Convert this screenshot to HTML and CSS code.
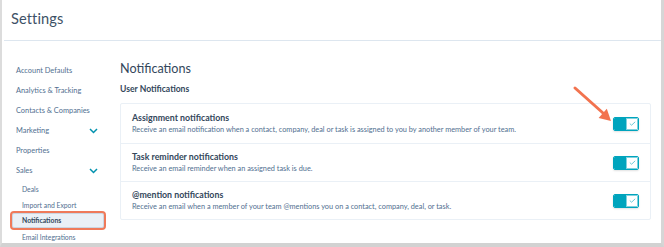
FILE: index.html
```html
<!DOCTYPE html>
<html>
<head>
<meta charset="utf-8">
<link rel="stylesheet" href="styles.css">
</head>
<body>
<div class="frame">
  <div class="header"><h1 class="title">Settings</h1></div>
  <div class="main">
    <nav class="sidebar">
      <div class="nav-item">Account Defaults</div>
      <div class="nav-item">Analytics &amp; Tracking</div>
      <div class="nav-item">Contacts &amp; Companies</div>
      <div class="nav-item">Marketing <svg class="chev" width="9" height="6" viewBox="0 0 9 6"><polyline points="1,1 4.5,4.5 8,1" fill="none" stroke="#0091ae" stroke-width="1.5"/></svg></div>
      <div class="nav-item">Properties</div>
      <div class="nav-item">Sales <svg class="chev" width="9" height="6" viewBox="0 0 9 6"><polyline points="1,1 4.5,4.5 8,1" fill="none" stroke="#0091ae" stroke-width="1.5"/></svg></div>
      <div class="sub-list">
        <div class="sub-item first">Deals</div>
        <div class="sub-item">Import and Export</div>
        <div class="sub-item active">Notifications</div>
        <div class="sub-item">Email Integrations</div>
      </div>
    </nav>
    <section class="content">
      <h2 class="heading">Notifications</h2>
      <h3 class="subheading">User Notifications</h3>
      <div class="card">
        <div class="row">
          <div class="row-text">
            <div class="row-title">Assignment notifications</div>
            <div class="row-desc">Receive an email notification when a contact, company, deal or task is assigned to you by another member of your team.</div>
          </div>
          <div class="toggle"><span class="on"></span><span class="knob"><svg width="7" height="5" viewBox="0 0 7 5"><polyline points="0.8,2.6 2.6,4.2 6.2,0.8" fill="none" stroke="#5cc3d3" stroke-width="0.9"/></svg></span></div>
        </div>
        <div class="row">
          <div class="row-text">
            <div class="row-title">Task reminder notifications</div>
            <div class="row-desc">Receive an email reminder when an assigned task is due.</div>
          </div>
          <div class="toggle"><span class="on"></span><span class="knob"><svg width="7" height="5" viewBox="0 0 7 5"><polyline points="0.8,2.6 2.6,4.2 6.2,0.8" fill="none" stroke="#5cc3d3" stroke-width="0.9"/></svg></span></div>
        </div>
        <div class="row">
          <div class="row-text">
            <div class="row-title">@mention notifications</div>
            <div class="row-desc">Receive an email when a member of your team @mentions you on a contact, company, deal, or task.</div>
          </div>
          <div class="toggle"><span class="on"></span><span class="knob"><svg width="7" height="5" viewBox="0 0 7 5"><polyline points="0.8,2.6 2.6,4.2 6.2,0.8" fill="none" stroke="#5cc3d3" stroke-width="0.9"/></svg></span></div>
        </div>
      </div>
    </section>
  </div>
  <svg class="arrow" width="46" height="44" viewBox="0 0 46 44">
    <line x1="5" y1="6" x2="33" y2="31" stroke="#f2734f" stroke-width="3" stroke-linecap="round"/>
    <polygon points="41,39 28.6,35.9 36.8,26.7" fill="#f2734f"/>
  </svg>
</div>
</body>
</html>
```

FILE: styles.css
```css
* { box-sizing: border-box; }
html, body { margin: 0; padding: 0; background: #fff; }
body { font-family: Lato, "Noto Sans", sans-serif; color: #33475b; }

.frame {
  position: relative;
  width: 664px;
  height: 247px;
  border-left: 2px solid #dcdcdc;
  border-right: 3px solid #d6d6d6;
  border-bottom: 4px solid #d2d2d2;
  overflow: hidden;
}

.header {
  height: 41px;
  margin-left: 2px;
  padding-left: 7px;
  border-bottom: 1px solid #dde6ef;
  display: flex;
  align-items: center;
}
.title {
  margin: 0 0 3px 0;
  font-size: 14.6px;
  font-weight: 400;
  color: #3d5166;
  letter-spacing: 0.1px;
}

.main { display: flex; }

.sidebar {
  width: 118px;
  flex: none;
  padding-top: 20px;
}
.nav-item {
  height: 20px;
  line-height: 20px;
  padding-left: 14px;
  padding-right: 22px;
  font-size: 7.4px;
  color: #516f90;
  display: flex;
  align-items: center;
  justify-content: space-between;
}
.chev { display: block; }

.sub-list { padding-top: 0; }
.sub-item {
  height: 16px;
  line-height: 16px;
  padding-left: 20px;
  font-size: 6.8px;
  color: #516f90;
}
.sub-item.active {
  margin-left: 8px;
  width: 96px;
  height: 19px;
  line-height: 15px;
  padding-left: 10px;
  margin-top: -2px;
  margin-bottom: -1px;
  border: 2px solid #ef7a5a;
  border-radius: 4px;
  background: #eaf0f6;
  box-shadow: inset 0 0 0 1px #cbd6e2;
  color: #33475b;
  font-weight: 700;
}

.content {
  flex: 1;
  padding-right: 10px;
  padding-top: 18px;
}
.heading {
  margin: 0;
  height: 20px;
  line-height: 20px;
  font-size: 12.6px;
  font-weight: 400;
  color: #33475b;
}
.subheading {
  margin: 0;
  padding-top: 1px;
  height: 24px;
  line-height: 18px;
  font-size: 8.6px;
  font-weight: 700;
  color: #33475b;
}

.card {
  border: 1px solid #eaf0f6;
  border-radius: 2px;
}
.row {
  height: 38px;
  display: flex;
  align-items: center;
  justify-content: space-between;
  padding: 0 11px 0 11px;
  border-top: 1px solid #eaf0f6;
}
.row:first-child { border-top: none; height: 39px; }
.row-text { padding-bottom: 0; }
.row-title {
  font-size: 8.8px;
  font-weight: 700;
  color: #33475b;
  line-height: 12px;
}
.row-desc {
  font-size: 7.35px;
  color: #516f90;
  line-height: 11px;
}

.toggle {
  width: 26px;
  height: 14px;
  display: flex;
  border: 1px solid #00a4bd;
  border-radius: 2px;
  overflow: hidden;
  box-shadow: 0 1px 2px rgba(0,0,0,0.12);
}
.toggle .on { width: 12px; background: #00a4bd; }
.toggle .knob {
  flex: 1;
  background: #fff;
  border: 1px solid #7fd1de;
  display: flex;
  align-items: center;
  justify-content: center;
}
.toggle .knob svg { display: block; }

.arrow {
  position: absolute;
  left: 568px;
  top: 82px;
}
```
